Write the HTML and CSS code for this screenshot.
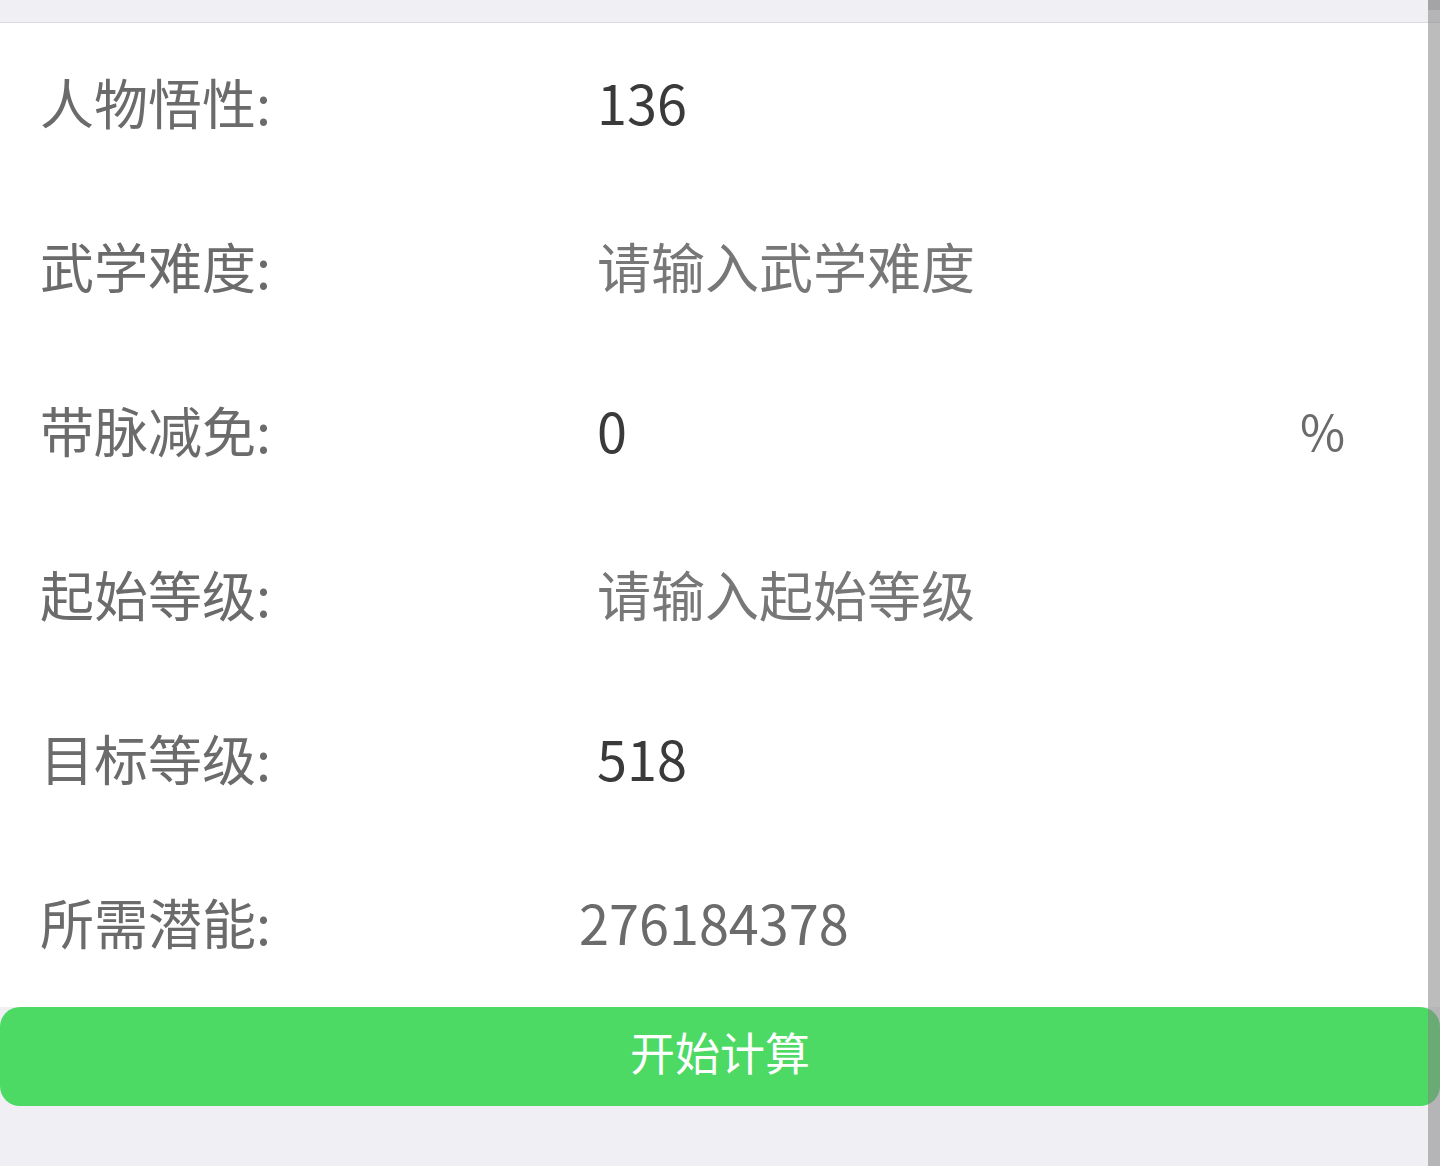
FILE: index.html
```html
<!DOCTYPE html>
<html lang="zh-CN">
<head>
    <meta charset="UTF-8">
    <meta name="viewport" content="width=device-width, initial-scale=1.0">
    <title>潜能计算</title>
    <link rel="stylesheet" href="styles.css">
</head>
<body>
    <div class="topbar"></div>
    <div class="form">
        <div class="row">
            <label class="label" for="wuxing">人物悟性:</label>
            <input class="field" id="wuxing" type="text" value="136">
        </div>
        <div class="row">
            <label class="label" for="nandu">武学难度:</label>
            <input class="field" id="nandu" type="text" placeholder="请输入武学难度">
        </div>
        <div class="row">
            <label class="label" for="jianmian">带脉减免:</label>
            <input class="field" id="jianmian" type="text" value="0">
            <span class="unit">%</span>
        </div>
        <div class="row">
            <label class="label" for="qishi">起始等级:</label>
            <input class="field" id="qishi" type="text" placeholder="请输入起始等级">
        </div>
        <div class="row">
            <label class="label" for="mubiao">目标等级:</label>
            <input class="field" id="mubiao" type="text" value="518">
        </div>
        <div class="row">
            <span class="label">所需潜能:</span>
            <span class="result">276184378</span>
        </div>
    </div>
    <button class="calc-btn">开始计算</button>

    <!-- 오버레이 스크롤바 -->
    <div class="scrollbar"><div class="thumb"></div></div>
</body>
</html>
```

FILE: styles.css
```css
html {
    overflow: hidden;
}

body {
    margin: 0;
    padding: 0;
    height: 1166px;
    background-color: #efeff4;
    font-family: "Noto Sans CJK SC", "Noto Sans", sans-serif;
}

.topbar {
    height: 22px;
    border-bottom: 1px solid #dcdce0;
}

.form {
    background-color: #fff;
}

.row {
    box-sizing: border-box;
    height: 164px;
    display: flex;
    align-items: center;
    padding-left: 40px;
    padding-bottom: 8px; /* 글자를 살짝 위로 */
}

.label {
    width: 557px;
    flex-shrink: 0;
    font-size: 54px;
    color: #6b6b6b;
}

.field {
    width: 703px;
    height: 90px;
    padding: 0;
    border: none;
    outline: none;
    background: transparent;
    font-family: inherit;
    font-size: 54px;
    color: #3a3a3a;
}

.field::placeholder {
    color: #777;
}

.unit {
    font-size: 49px;
    color: #6b6b6b;
}

.result {
    margin-left: -18px;
    font-size: 54px;
    color: #6b6b6b;
}

.calc-btn {
    display: block;
    width: 100%;
    height: 99px;
    margin: 0;
    padding: 0 0 10px;
    border: none;
    border-radius: 20px;
    background-color: #4cd964;
    color: #fff;
    font-family: inherit;
    font-size: 45px;
    cursor: pointer;
}

.scrollbar {
    position: fixed;
    top: 0;
    right: 0;
    width: 12px;
    height: 100%;
    background-color: rgba(132, 132, 132, 0.54);
}

.thumb {
    height: 10px;
    background-color: rgba(100, 100, 100, 0.2);
}
```
